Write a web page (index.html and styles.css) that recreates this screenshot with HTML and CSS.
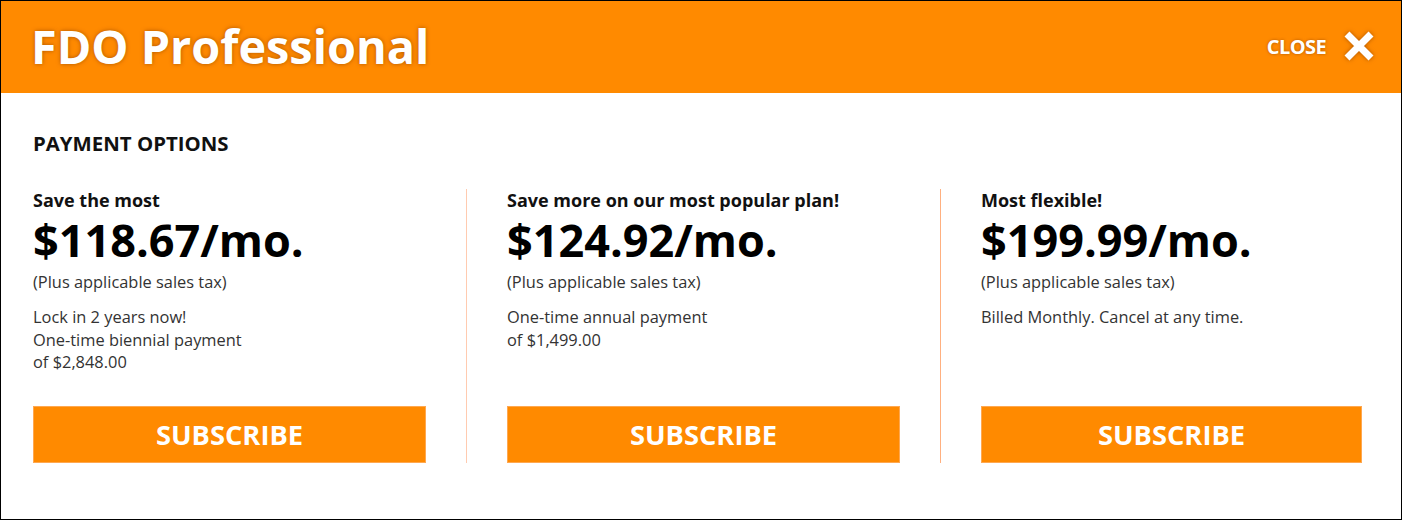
FILE: index.html
```html
<!DOCTYPE html>
<html>
<head>
<meta charset="utf-8">
<link rel="stylesheet" href="styles.css">
</head>
<body>
<div class="modal">
  <header class="head">
    <h1 class="title">FDO Professional</h1>
    <div class="close">
      <span class="close-label">CLOSE</span>
      <svg class="close-x" width="32" height="30" viewBox="0 0 32 30">
        <path d="M4 3 L28 27 M28 3 L4 27" stroke="#fff" stroke-width="7" stroke-linecap="butt" fill="none"/>
      </svg>
    </div>
  </header>
  <main class="body">
    <h2 class="section">PAYMENT OPTIONS</h2>
    <div class="plans">
      <div class="plan plan-1">
        <div class="tag">Save the most</div>
        <div class="price">$118.67/mo.</div>
        <div class="tax">(Plus applicable sales tax)</div>
        <div class="desc">Lock in 2 years now!<br>One-time biennial payment<br>of $2,848.00</div>
        <button class="btn">SUBSCRIBE</button>
      </div>
      <div class="plan plan-2">
        <div class="tag">Save more on our most popular plan!</div>
        <div class="price">$124.92/mo.</div>
        <div class="tax">(Plus applicable sales tax)</div>
        <div class="desc">One-time annual payment<br>of $1,499.00</div>
        <button class="btn">SUBSCRIBE</button>
      </div>
      <div class="plan plan-3">
        <div class="tag">Most flexible!</div>
        <div class="price">$199.99/mo.</div>
        <div class="tax">(Plus applicable sales tax)</div>
        <div class="desc">Billed Monthly. Cancel at any time.</div>
        <button class="btn">SUBSCRIBE</button>
      </div>
    </div>
  </main>
</div>
</body>
</html>
```
FILE: styles.css
```css
* { box-sizing: border-box; }
html, body { margin: 0; padding: 0; background: #fff; }
body { font-family: "Open Sans", "Noto Sans", sans-serif; }
.modal {
  width: 1402px;
  height: 520px;
  border: 1px solid #000;
  display: flex;
  flex-direction: column;
}
.head {
  height: 92px;
  background: #ff8a00;
  display: flex;
  align-items: center;
  justify-content: space-between;
  padding: 0 26px 0 30px;
}
.title {
  margin: 0;
  color: #fff;
  font-size: 46.8px;
  font-weight: 700;
  text-shadow: 0 0 4px rgba(120, 50, 0, 0.6);
  line-height: 1;
  padding-bottom: 2px;
}
.close {
  display: flex;
  align-items: center;
  gap: 17px;
  padding-bottom: 2px;
}
.close-label {
  color: #fff;
  font-size: 20px;
  font-weight: 700;
  text-shadow: 0 0 3px rgba(120, 50, 0, 0.6);
  letter-spacing: -0.6px;
}
.close-x { filter: drop-shadow(0 0 2px rgba(120, 50, 0, 0.6)); }
.body {
  flex: 1;
  padding: 36px 39px 0 32px;
}
.section {
  margin: 0 0 32px;
  font-size: 20.4px;
  font-weight: 700;
  color: #111;
  line-height: 28px;
}
.plans {
  display: flex;
}
.plan {
  display: flex;
  flex-direction: column;
  height: 274px;
}
.plan-1 { width: 434px; padding-right: 40px; border-right: 1px solid #ffcbb0; }
.plan-2 { width: 474px; padding: 0 40px; border-right: 1px solid #ffb080; }
.plan-3 { flex: 1; padding-left: 40px; }
.tag {
  font-size: 18px;
  font-weight: 700;
  color: #111;
  line-height: 22px;
}
.price {
  font-size: 45px;
  font-weight: 700;
  color: #000;
  line-height: 58px;
}
.tax {
  font-size: 16.4px;
  color: #333;
  line-height: 22px;
  margin-top: 2px;
}
.desc {
  font-size: 16.4px;
  color: #333;
  line-height: 22.5px;
  margin-top: 13px;
}
.btn {
  margin-top: auto;
  height: 57px;
  width: 100%;
  background: #ff8a00;
  border: 1px solid #ffa850;
  color: #fff;
  font-family: "Open Sans", sans-serif;
  font-size: 27.3px;
  font-weight: 700;
  padding: 0;
}
```
